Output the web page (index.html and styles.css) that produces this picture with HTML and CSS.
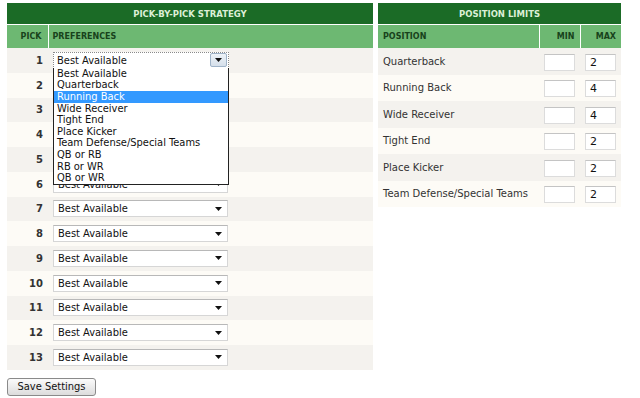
FILE: index.html
```html
<!DOCTYPE html>
<html lang="en">
<head>
  <meta charset="UTF-8">
  <title>Draft Settings</title>
  <link rel="stylesheet" href="styles.css">
</head>
<body>
  <div class="page">
    <div class="strategy">
      <table class="grid picks">
        <colgroup><col class="col-pick"><col></colgroup>
        <tr><th class="title" colspan="2">PICK-BY-PICK STRATEGY</th></tr>
        <tr class="sub"><th class="num">PICK</th><th class="left sep">PREFERENCES</th></tr>
        <tr class="odd">
          <td class="num">1</td>
          <td>
            <div class="select open">
              <span class="value">Best Available</span>
              <span class="btn"><svg width="7" height="4" viewBox="0 0 7 4"><path d="M0 0h7L3.5 4z"/></svg></span>
              <!-- lista aberta do primeiro select -->
              <ul class="list">
                <li>Best Available</li>
                <li>Quarterback</li>
                <li class="hl">Running Back</li>
                <li>Wide Receiver</li>
                <li>Tight End</li>
                <li>Place Kicker</li>
                <li>Team Defense/Special Teams</li>
                <li>QB or RB</li>
                <li>RB or WR</li>
                <li>QB or WR</li>
              </ul>
            </div>
          </td>
        </tr>
        <tr class="even"><td class="num">2</td><td><div class="select"><span class="value">Best Available</span><svg width="7" height="4" viewBox="0 0 7 4"><path d="M0 0h7L3.5 4z"/></svg></div></td></tr>
        <tr class="odd"><td class="num">3</td><td><div class="select"><span class="value">Best Available</span><svg width="7" height="4" viewBox="0 0 7 4"><path d="M0 0h7L3.5 4z"/></svg></div></td></tr>
        <tr class="even"><td class="num">4</td><td><div class="select"><span class="value">Best Available</span><svg width="7" height="4" viewBox="0 0 7 4"><path d="M0 0h7L3.5 4z"/></svg></div></td></tr>
        <tr class="odd"><td class="num">5</td><td><div class="select"><span class="value">Best Available</span><svg width="7" height="4" viewBox="0 0 7 4"><path d="M0 0h7L3.5 4z"/></svg></div></td></tr>
        <tr class="even"><td class="num">6</td><td><div class="select"><span class="value">Best Available</span><svg width="7" height="4" viewBox="0 0 7 4"><path d="M0 0h7L3.5 4z"/></svg></div></td></tr>
        <tr class="odd"><td class="num">7</td><td><div class="select"><span class="value">Best Available</span><svg width="7" height="4" viewBox="0 0 7 4"><path d="M0 0h7L3.5 4z"/></svg></div></td></tr>
        <tr class="even"><td class="num">8</td><td><div class="select"><span class="value">Best Available</span><svg width="7" height="4" viewBox="0 0 7 4"><path d="M0 0h7L3.5 4z"/></svg></div></td></tr>
        <tr class="odd"><td class="num">9</td><td><div class="select"><span class="value">Best Available</span><svg width="7" height="4" viewBox="0 0 7 4"><path d="M0 0h7L3.5 4z"/></svg></div></td></tr>
        <tr class="even"><td class="num">10</td><td><div class="select"><span class="value">Best Available</span><svg width="7" height="4" viewBox="0 0 7 4"><path d="M0 0h7L3.5 4z"/></svg></div></td></tr>
        <tr class="odd"><td class="num">11</td><td><div class="select"><span class="value">Best Available</span><svg width="7" height="4" viewBox="0 0 7 4"><path d="M0 0h7L3.5 4z"/></svg></div></td></tr>
        <tr class="even"><td class="num">12</td><td><div class="select"><span class="value">Best Available</span><svg width="7" height="4" viewBox="0 0 7 4"><path d="M0 0h7L3.5 4z"/></svg></div></td></tr>
        <tr class="odd"><td class="num">13</td><td><div class="select"><span class="value">Best Available</span><svg width="7" height="4" viewBox="0 0 7 4"><path d="M0 0h7L3.5 4z"/></svg></div></td></tr>
      </table>
      <button class="save">Save Settings</button>
    </div>

    <table class="grid limits">
      <colgroup><col><col class="col-min"><col class="col-max"></colgroup>
      <tr><th class="title" colspan="3">POSITION LIMITS</th></tr>
      <tr class="sub"><th class="left">POSITION</th><th class="num sep">MIN</th><th class="num sep">MAX</th></tr>
      <tr class="odd"><td class="pos">Quarterback</td><td class="box"><span class="field"></span></td><td class="box"><span class="field">2</span></td></tr>
      <tr class="even"><td class="pos">Running Back</td><td class="box"><span class="field"></span></td><td class="box"><span class="field">4</span></td></tr>
      <tr class="odd"><td class="pos">Wide Receiver</td><td class="box"><span class="field"></span></td><td class="box"><span class="field">4</span></td></tr>
      <tr class="even"><td class="pos">Tight End</td><td class="box"><span class="field"></span></td><td class="box"><span class="field">2</span></td></tr>
      <tr class="odd"><td class="pos">Place Kicker</td><td class="box"><span class="field"></span></td><td class="box"><span class="field">2</span></td></tr>
      <tr class="even"><td class="pos">Team Defense/Special Teams</td><td class="box"><span class="field"></span></td><td class="box"><span class="field">2</span></td></tr>
    </table>
  </div>
</body>
</html>
```

FILE: styles.css
```css
body {
  margin: 0;
  padding: 3px 7px;
  background-color: #ffffff;
  font-family: "DejaVu Sans", Verdana, sans-serif;
  color: #333;
}

.page {
  display: flex;
  align-items: flex-start;
  gap: 5px;
}

.strategy {
  display: flex;
  flex-direction: column;
  align-items: flex-start;
}

.grid {
  border-collapse: collapse;
  table-layout: fixed;
}

.grid th,
.grid td {
  padding: 0;
}

.picks {
  width: 366px;
}

.col-pick {
  width: 41px;
}

.limits {
  width: 243px;
}

.col-min {
  width: 41px;
}

.col-max {
  width: 40px;
}

.title {
  height: 21px;
  background-color: #1b6b26;
  color: #dcefd6;
  font-size: 8.5px;
  font-weight: bold;
  text-align: center;
  border-bottom: 1px solid #ffffff;
}

.sub th {
  height: 23px;
  background-color: #6db872;
  color: #18421b;
  font-size: 8px;
  font-weight: bold;
}

.sub .left {
  text-align: left;
  padding-left: 4px;
}

.limits .sub .left {
  padding-left: 5px;
}

.sub .num {
  text-align: right;
  padding-right: 6px;
}

.limits .sub .num:last-child {
  padding-right: 5px;
}

.sub .sep {
  border-left: 1px solid #ffffff;
}

.odd {
  background-color: #f4f2ee;
}

.even {
  background-color: #fdfbf6;
}

.picks td {
  height: 24.75px;
}

.picks td.num {
  text-align: right;
  padding-right: 5px;
  font-size: 10px;
  font-weight: bold;
  color: #333;
}

.picks td:last-child {
  padding-left: 5px;
}

.select {
  position: relative;
  box-sizing: border-box;
  width: 175px;
  height: 17px;
  display: flex;
  align-items: center;
  justify-content: space-between;
  padding: 0 5px 0 4px;
  background-color: #ffffff;
  border: 1px solid #d6d6d6;
  border-top-color: #b8b8b8;
  font-family: "DejaVu Sans Condensed", "Liberation Sans", sans-serif;
  font-size: 11px;
  color: #111;
}

.select svg {
  fill: #111;
}

.select.open {
  width: 176px;
  padding: 0 1px 0 0;
  border: 1px dotted #8a8a8a;
}

.select.open .value {
  padding-left: 3px;
}

.btn {
  box-sizing: border-box;
  width: 17px;
  height: 14px;
  display: flex;
  align-items: center;
  justify-content: center;
  border: 1px solid #9fb3c8;
  border-radius: 2px;
  background: linear-gradient(#eef3f8, #d5dfea);
}

.list {
  position: absolute;
  top: 15px;
  left: -1px;
  z-index: 2;
  box-sizing: border-box;
  width: 176px;
  margin: 0;
  padding: 0;
  list-style: none;
  background-color: #ffffff;
  border: 1px solid #222;
  border-top: none;
}

.list li {
  height: 11.6px;
  line-height: 11.6px;
  padding-left: 3px;
  color: #111;
  white-space: nowrap;
}

.list .hl {
  background-color: #3399ff;
  color: #ffffff;
}

.limits td {
  height: 26.5px;
}

.limits td.pos {
  padding-left: 5px;
  font-size: 10px;
  color: #333;
  white-space: nowrap;
}

.limits td.box {
  text-align: right;
  padding-right: 6px;
}

.limits td.box:last-child {
  padding-right: 5px;
}

.field {
  display: inline-block;
  box-sizing: border-box;
  width: 31px;
  height: 17px;
  padding-left: 4px;
  text-align: left;
  vertical-align: middle;
  background-color: #ffffff;
  border: 1px solid #dcdcdc;
  border-top-color: #c4c4c4;
  font-size: 11px;
  line-height: 15px;
  color: #111;
}

.save {
  margin-top: 8px;
  height: 18px;
  width: 89px;
  padding: 0;
  font-family: "DejaVu Sans Condensed", "Liberation Sans", sans-serif;
  font-size: 11px;
  color: #111;
  background: linear-gradient(#fbfbfb, #dcdcdc);
  border: 1px solid #8a8a8a;
  border-radius: 3px;
}
```
